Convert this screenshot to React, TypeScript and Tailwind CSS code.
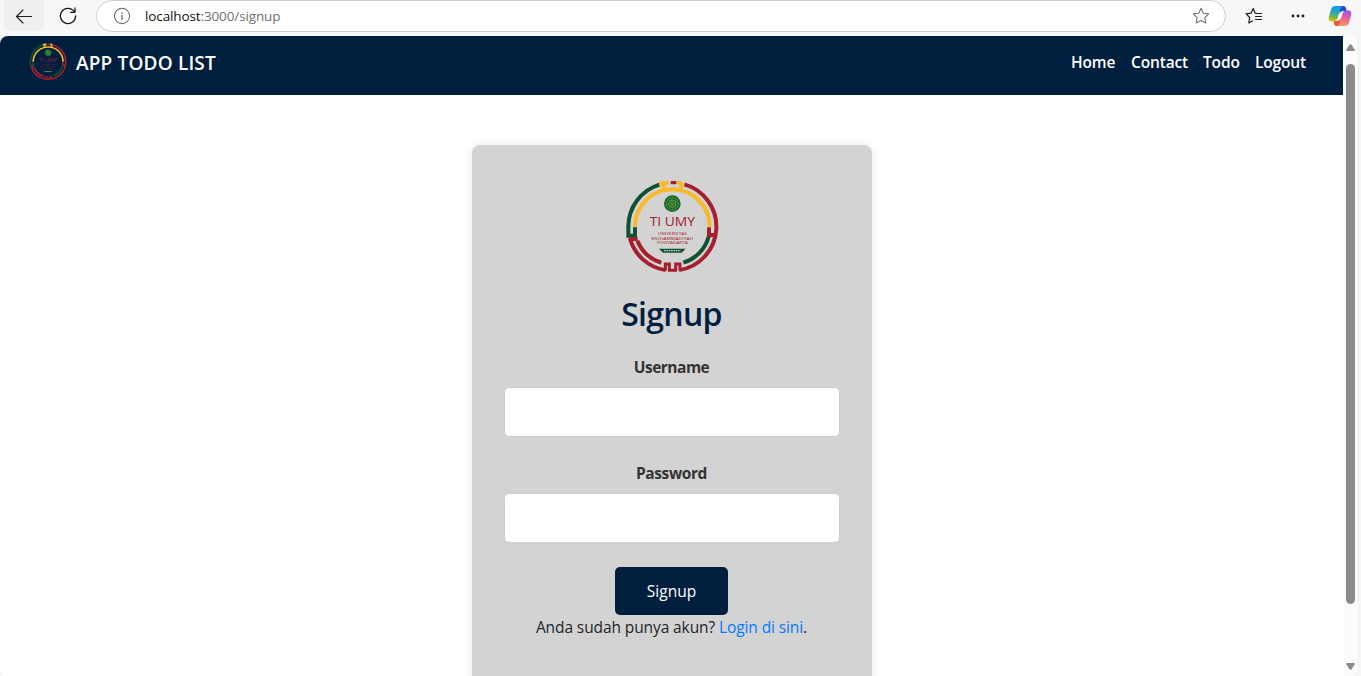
import React from "react";

function arc(r: number, a: number, b: number) {
  const p = (d: number) => {
    const t = (d * Math.PI) / 180;
    return `${(187 + r * Math.sin(t)).toFixed(1)} ${(170 - r * Math.cos(t)).toFixed(1)}`;
  };
  return `M${p(a)}A${r} ${r} 0 ${b - a > 180 ? 1 : 0} 1 ${p(b)}`;
}

function Logo({ className }: { className: string }) {
  return (
    <svg viewBox="36 21 300 300" className={className} fill="none" strokeWidth="12">
      <g stroke="#0f5132">
        <path d={arc(132, 270, 343)} />
        <path d="M55 168V197H75V172" />
        <path d={arc(113, 105, 163)} />
      </g>
      <g stroke="#fbb829">
        <path d={arc(112, 270, 450)} />
        <path d="M147 41L176 38M161 42V60M203 35L215 43L210 60" />
      </g>
      <g stroke="#a5202c">
        <path d="M182 38H199" strokeWidth="10" />
        <path d={arc(132, 16, 171)} />
        <path d={arc(132, 189, 255)} />
        <path d={arc(113, 197, 248)} />
        <path d="M58 207L83 207M297 172V195H318" />
        <path d="M166 302V282H178V301H197V282H210V302" strokeWidth="9" />
      </g>
      <circle cx="187" cy="101" r="25" fill="#17672f" />
      <g stroke="#79a742" strokeWidth="3">
        <circle cx="187" cy="101" r="18" strokeDasharray="5 3" />
        <circle cx="187" cy="101" r="11" />
        <circle cx="187" cy="101" r="4" />
      </g>
      <g fill="#a5202c" textAnchor="middle" className="font-['Open_Sans',sans-serif]">
        <text x="187" y="168" fontSize="38" fontWeight="500" textLength="136" lengthAdjust="spacingAndGlyphs">TI UMY</text>
        <g fontSize="13" fontWeight="500">
          <text x="187" y="195" textLength="88" lengthAdjust="spacingAndGlyphs">UNIVERSITAS</text>
          <text x="187" y="209" textLength="126" lengthAdjust="spacingAndGlyphs">MUHAMMADIYAH</text>
          <text x="187" y="223" textLength="94" lengthAdjust="spacingAndGlyphs">YOGYAKARTA</text>
        </g>
      </g>
      <path d="M147 236H227L215 248H159Z" fill="#0f5132" />
      <path d="M162 242H212" stroke="#b9cfc4" strokeWidth="4" strokeDasharray="5 2" />
    </svg>
  );
}

function Copilot() {
  return (
    <svg viewBox="0 0 24 22" className="h-[22px] w-6 shrink-0">
      <defs>
        <linearGradient id="cool" x1=".5" y1="0" x2=".35" y2="1">
          <stop offset="0" stopColor="#1699ee" />
          <stop offset=".4" stopColor="#22a6c4" />
          <stop offset=".75" stopColor="#78b83c" />
          <stop offset="1" stopColor="#edc510" />
        </linearGradient>
        <linearGradient id="warm" x1=".7" y1="0" x2=".4" y2="1">
          <stop offset="0" stopColor="#9555ed" />
          <stop offset=".45" stopColor="#e65aa0" />
          <stop offset="1" stopColor="#ff9c57" />
        </linearGradient>
      </defs>
      <path d="M11 1H15.5C17 1 17.6 2 18 3.4L18.8 6H15C13 6 12.3 7 11.7 9Z" fill="#184fc5" />
      <path d="M13 21H8.5C7 21 6.4 20 6 18.6L5.2 16H9C11 16 11.7 15 12.3 13Z" fill="#ef5438" />
      <path d="M7.5 1H15C13.5 1.2 12.9 2.6 12.3 4.5L9.2 14C8.7 15.5 7.8 16.5 6.2 16.5H4C1 16.5 .2 14.5 1 11.5L3 4.5C3.7 2 5 1 7.5 1Z" fill="url(#cool)" />
      <path d="M16.5 21H9C10.5 20.8 11.1 19.4 11.7 17.5L14.8 8C15.3 6.5 16.2 5.5 17.8 5.5H20C23 5.5 23.8 7.5 23 10.5L21 17.5C20.3 20 19 21 16.5 21Z" fill="url(#warm)" />
    </svg>
  );
}

function BrowserBar() {
  return (
    <div className="flex h-9 shrink-0 items-start bg-[#f7f7f7]">
      <div className="ml-1 flex h-[31px] w-10 items-center justify-center rounded-b bg-[#efefef]">
        <svg viewBox="0 0 18 16" className="h-4 w-[18px]" fill="none" stroke="#1b1b1b" strokeWidth="1.1" strokeLinecap="round" strokeLinejoin="round">
          <path d="M16.5 8.5H1.5M8 2L1.5 8.5L8 15" />
        </svg>
      </div>
      <svg viewBox="0 0 18 18" className="mt-[7px] ml-[15px] h-[18px] w-[18px]" fill="none" stroke="#1b1b1b" strokeWidth="1.3" strokeLinecap="round" strokeLinejoin="round">
        <path d="M16.6 9A7.6 7.6 0 1 1 14.4 3.6L16 5.2M16 1V5.3H11.6" />
      </svg>
      <div className="ml-[19px] flex h-8 w-[1130px] items-center rounded-full border border-[#cfcfcf] bg-white pr-[15px] pl-4">
        <svg viewBox="0 0 18 18" className="h-[18px] w-[18px]" fill="none" stroke="#767676" strokeWidth="1.1">
          <circle cx="9" cy="9" r="7.6" />
          <path d="M9 8V13M9 5V6.5" strokeWidth="1.4" />
        </svg>
        <div className="ml-[14px] flex-1 font-['Open_Sans',sans-serif] text-[13.5px] tracking-[-0.12px] text-[#707070]">
          <span className="text-[#111]">localhost</span>:3000/signup
        </div>
        <svg viewBox="0 0 18 18" className="h-[18px] w-[18px]" fill="none" stroke="#767676" strokeWidth="1.1" strokeLinejoin="round">
          <path d="M9 1.3L11.3 6.2L16.7 6.9L12.8 10.6L13.8 16L9 13.4L4.2 16L5.2 10.6L1.3 6.9L6.7 6.2Z" />
        </svg>
      </div>
      <svg viewBox="0 0 18 18" className="mt-[7px] ml-[19px] h-[18px] w-[18px]" fill="none" stroke="#1b1b1b" strokeWidth="1.2" strokeLinecap="round" strokeLinejoin="round">
        <path d="M12 6.5L10.2 6.2L8.2 1.5L6 6.2L1.1 6.9L4.7 10.5L3.8 16L7.5 14M11 6.5H16.5M10.5 9.5H16.5M10.5 12.5H16.5" />
      </svg>
      <svg viewBox="0 0 14 4" className="mt-[14px] ml-[28px] h-1 w-[14px]" fill="#1b1b1b">
        <circle cx="2" cy="2" r="1.4" /><circle cx="7" cy="2" r="1.4" /><circle cx="12" cy="2" r="1.4" />
      </svg>
      <div className="mt-[5px] ml-[23px]"><Copilot /></div>
    </div>
  );
}

export default function App() {
  return (
    <div className="flex h-[676px] w-[1361px] flex-col overflow-hidden bg-[#f7f7f7] font-['Open_Sans',sans-serif] text-[#212529]">
      <BrowserBar />
      <div className="flex h-[640px] w-[1359px] overflow-hidden rounded-lg border-r border-[#ececec] bg-white">
        <main className="w-[1343px] overflow-hidden">
          <nav className="flex h-[59px] items-start bg-[#001f3f] pr-9 pl-7 text-white">
            <Logo className="mt-[6px] h-10 w-10 shrink-0" />
            <span className="mt-[12px] ml-2 whitespace-nowrap text-[19px] leading-[30px] font-semibold tracking-[0.17px]">APP TODO LIST</span>
            <div className="mt-[14px] ml-auto flex gap-4 text-[15.5px] leading-6 font-semibold tracking-[-0.15px]">
              <a className="w-11">Home</a>
              <a className="w-14">Contact</a>
              <a className="w-9">Todo</a>
              <a className="w-[52px]">Logout</a>
            </div>
          </nav>
          <form className="mx-auto mt-[50px] flex h-[560px] w-[400px] flex-col items-center rounded-lg bg-[#d3d3d3] px-8 pt-8 shadow-[0_0_10px_rgba(0,0,0,0.1)]">
            <Logo className="h-[100px] w-[100px] shrink-0" />
            <h2 className="mt-[18px] text-[32px] leading-[38px] font-semibold tracking-[-0.7px] text-[#001f3f]">Signup</h2>
            <label className="mt-[22px] text-[15.5px] leading-6 font-bold tracking-[-0.5px] text-[#333]">Username</label>
            <input className="mt-2 h-[50px] w-full shrink-0 rounded-[5px] border border-[#ccc] bg-white" />
            <label className="mt-6 text-[15.5px] leading-6 font-bold tracking-[-0.4px] text-[#333]">Password</label>
            <input type="password" className="mt-2 h-[50px] w-full shrink-0 rounded-[5px] border border-[#ccc] bg-white" />
            <button type="button" className="mt-6 h-12 w-[113px] shrink-0 rounded-[5px] bg-[#001f3f] pt-0.5 text-[15.5px] tracking-[0.05px] text-white">Signup</button>
            <p className="text-[15.5px] leading-6 tracking-[-0.1px] whitespace-nowrap">
              Anda sudah punya akun? <a className="text-[#007bff]">Login di sini</a>.
            </p>
          </form>
        </main>
        <div className="flex w-[15px] flex-col items-center bg-[#fcfcfc]">
          <svg viewBox="0 0 9 7" className="mt-2 h-[7px] w-[9px]" fill="#8b8b8b"><path d="M4.5 0Q5 0 5.5 .8L8.8 5.7Q9.3 7 8 7H1Q-.3 7 .2 5.7L3.5 .8Q4 0 4.5 0Z" /></svg>
          <div className="mt-[13px] h-[540px] w-[9px] rounded-full bg-[#8b8b8b]" />
          <svg viewBox="0 0 9 7" className="mt-[59px] h-[7px] w-[9px]" fill="#8b8b8b"><path d="M4.5 7Q5 7 5.5 6.2L8.8 1.3Q9.3 0 8 0H1Q-.3 0 .2 1.3L3.5 6.2Q4 7 4.5 7Z" /></svg>
        </div>
      </div>
    </div>
  );
}
